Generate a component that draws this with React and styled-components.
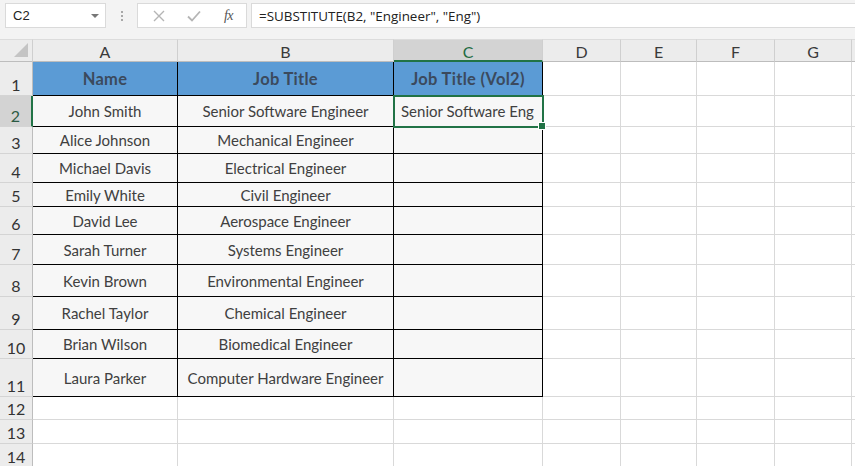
import styled, { createGlobalStyle } from "styled-components";

const GlobalStyle = createGlobalStyle`
  html, body { margin: 0; padding: 0; background: #ffffff; overflow: hidden; }
  body { font-family: "Lato", "Open Sans", sans-serif; }
`;

const Page = styled.div`
  width: 855px;
  height: 466px;
  overflow: hidden;
  display: flex;
  flex-direction: column;
  background: #ffffff;
`;

const Toolbar = styled.div`
  height: 39px;
  flex: none;
  background: #f3f3f3;
  display: flex;
  align-items: flex-start;
  padding: 3px 0 0 5px;
  box-sizing: border-box;
`;

const NameBox = styled.div`
  width: 101px;
  height: 25px;
  box-sizing: border-box;
  background: #fff;
  border: 1px solid #dadada;
  display: flex;
  align-items: center;
  justify-content: space-between;
  padding: 0 6px 0 7px;
  font-family: "Liberation Sans", Arial, sans-serif;
  font-size: 13px;
  color: #222;
`;

const Caret = styled.span`
  width: 0;
  height: 0;
  border-left: 4px solid transparent;
  border-right: 4px solid transparent;
  border-top: 4px solid #777;
`;

const Grip = styled.div`
  width: 31px;
  height: 25px;
  display: flex;
  flex-direction: column;
  align-items: center;
  justify-content: center;
  gap: 2px;
  span {
    width: 2px;
    height: 2px;
    background: #a8a8a8;
  }
`;

const IconBox = styled.div`
  width: 110px;
  height: 25px;
  box-sizing: border-box;
  background: #fff;
  border: 1px solid #dadada;
  display: flex;
  align-items: center;
  padding: 0 0 0 3px;
`;

const IconSlot = styled.div`
  width: 36px;
  display: flex;
  align-items: center;
  justify-content: center;
`;

const Fx = styled.span`
  font-family: "Liberation Serif", "Times New Roman", serif;
  font-style: italic;
  font-size: 14px;
  color: #555;
  letter-spacing: -0.5px;
`;

const FormulaBox = styled.div`
  flex: 1;
  height: 25px;
  margin-left: 4px;
  box-sizing: border-box;
  background: #fff;
  border: 1px solid #dadada;
  border-right: none;
  display: flex;
  align-items: center;
  padding-left: 7px;
  font-family: "Open Sans", sans-serif;
  font-size: 13.4px;
  color: #222;
  white-space: nowrap;
`;

const Sheet = styled.div`
  display: grid;
  grid-template-columns: 33px 145px 216px 149px 78px 76px 78px 77px 80px;
  grid-template-rows: ${(p) => p.$rows};
  flex: none;
`;

const HeadCell = styled.div`
  box-sizing: border-box;
  background: ${(p) => (p.$active ? "#d3d3d3" : "#ececec")};
  color: ${(p) => (p.$active ? "#1e6b41" : "#3a3a3a")};
  border-right: 1px solid #cfcfcf;
  border-top: 1px solid #dcdcdc;
  border-bottom: ${(p) => (p.$active ? "2px solid #217346" : "1px solid #bdbdbd")};
  display: flex;
  align-items: center;
  justify-content: center;
  font-family: "Lato", sans-serif;
  font-size: 16px;
  padding-top: 2px;
`;

const Corner = styled.div`
  box-sizing: border-box;
  background: #ececec;
  border-right: 1px solid #cfcfcf;
  border-top: 1px solid #dcdcdc;
  border-bottom: 1px solid #bdbdbd;
  position: relative;
  &::after {
    content: "";
    position: absolute;
    right: 4px;
    bottom: 4px;
    width: 0;
    height: 0;
    border-left: 14px solid transparent;
    border-bottom: 14px solid #c4c4c4;
  }
`;

const RowHead = styled.div`
  box-sizing: border-box;
  background: ${(p) => (p.$active ? "#d3d3d3" : "#ececec")};
  color: ${(p) => (p.$active ? "#2c5a43" : "#333")};
  border-right: ${(p) => (p.$active ? "2px solid #217346" : "1px solid #bdbdbd")};
  border-bottom: 1px solid #d4d4d4;
  display: flex;
  align-items: flex-end;
  justify-content: center;
  padding-bottom: 1px;
  font-family: "Lato", sans-serif;
  font-size: 16px;
  line-height: 18px;
`;

const Cell = styled.div`
  box-sizing: border-box;
  position: relative;
  background: ${(p) => (p.$header ? "#5b9bd5" : p.$table ? "#f7f7f7" : "#ffffff")};
  border-right: 1px solid ${(p) => (p.$table ? "#000" : "#d9d9d9")};
  border-bottom: 1px solid ${(p) => (p.$table ? "#000" : "#d9d9d9")};
  display: flex;
  align-items: center;
  justify-content: ${(p) => (p.$left ? "flex-start" : "center")};
  padding: 0 7px;
  font-family: "Lato", sans-serif;
  font-size: ${(p) => (p.$header ? "16.5px" : "15px")};
  font-weight: ${(p) => (p.$header ? 700 : 400)};
  letter-spacing: ${(p) => (p.$header ? "0.3px" : "0")};
  color: ${(p) => (p.$header ? "#3b4a5d" : "#404040")};
  white-space: nowrap;
  ${(p) =>
    p.$selected &&
    `
    outline: 2px solid #217346;
    outline-offset: -1px;
    z-index: 2;
    &::after {
      content: "";
      position: absolute;
      right: -4px;
      bottom: -4px;
      width: 6px;
      height: 6px;
      background: #217346;
      border: 1px solid #fff;
    }
  `}
`;

const cols = ["A", "B", "C", "D", "E", "F", "G", ""];
const rowHeights = [34, 31, 27, 29, 24, 28, 30, 32, 33, 29, 38, 23, 24, 24];

const data = [
  ["John Smith", "Senior Software Engineer", "Senior Software Eng"],
  ["Alice Johnson", "Mechanical Engineer", ""],
  ["Michael Davis", "Electrical Engineer", ""],
  ["Emily White", "Civil Engineer", ""],
  ["David Lee", "Aerospace Engineer", ""],
  ["Sarah Turner", "Systems Engineer", ""],
  ["Kevin Brown", "Environmental Engineer", ""],
  ["Rachel Taylor", "Chemical Engineer", ""],
  ["Brian Wilson", "Biomedical Engineer", ""],
  ["Laura Parker", "Computer Hardware Engineer", ""],
];

const headers = ["Name", "Job Title", "Job Title (Vol2)"];

function CrossIcon() {
  return (
    <svg width="12" height="12" viewBox="0 0 12 12">
      <path d="M1 1 L11 11 M11 1 L1 11" stroke="#b5b5b5" strokeWidth="1.4" fill="none" />
    </svg>
  );
}

function CheckIcon() {
  return (
    <svg width="14" height="12" viewBox="0 0 14 12">
      <path d="M1 6.5 L5 10.5 L13 1.5" stroke="#b5b5b5" strokeWidth="1.8" fill="none" />
    </svg>
  );
}

export default function App() {
  const rows = [];
  for (let r = 1; r <= 14; r++) {
    const inTable = r <= 11;
    rows.push(
      <RowHead key={`rh${r}`} $active={r === 2}>
        {r}
      </RowHead>
    );
    cols.forEach((c, ci) => {
      const tableCol = ci < 3 && inTable;
      let text = "";
      if (r === 1 && ci < 3) text = headers[ci];
      else if (r > 1 && inTable && ci < 3) text = data[r - 2][ci];
      rows.push(
        <Cell
          key={`${ci}-${r}`}
          $table={tableCol}
          $header={r === 1 && ci < 3}
          $selected={r === 2 && c === "C"}
          $left={r === 2 && c === "C"}
        >
          {text}
        </Cell>
      );
    });
  }

  return (
    <>
      <GlobalStyle />
      <Page>
        <Toolbar>
          <NameBox>
            C2
            <Caret />
          </NameBox>
          <Grip>
            <span />
            <span />
            <span />
          </Grip>
          <IconBox>
            <IconSlot>
              <CrossIcon />
            </IconSlot>
            <IconSlot>
              <CheckIcon />
            </IconSlot>
            <IconSlot>
              <Fx>fx</Fx>
            </IconSlot>
          </IconBox>
          <FormulaBox>=SUBSTITUTE(B2, "Engineer", "Eng")</FormulaBox>
        </Toolbar>
        <Sheet $rows={`23px ${rowHeights.map((h) => h + "px").join(" ")}`}>
          <Corner />
          {cols.map((c, i) => (
            <HeadCell key={`h${i}`} $active={c === "C"}>
              {c}
            </HeadCell>
          ))}
          {rows}
        </Sheet>
      </Page>
    </>
  );
}
